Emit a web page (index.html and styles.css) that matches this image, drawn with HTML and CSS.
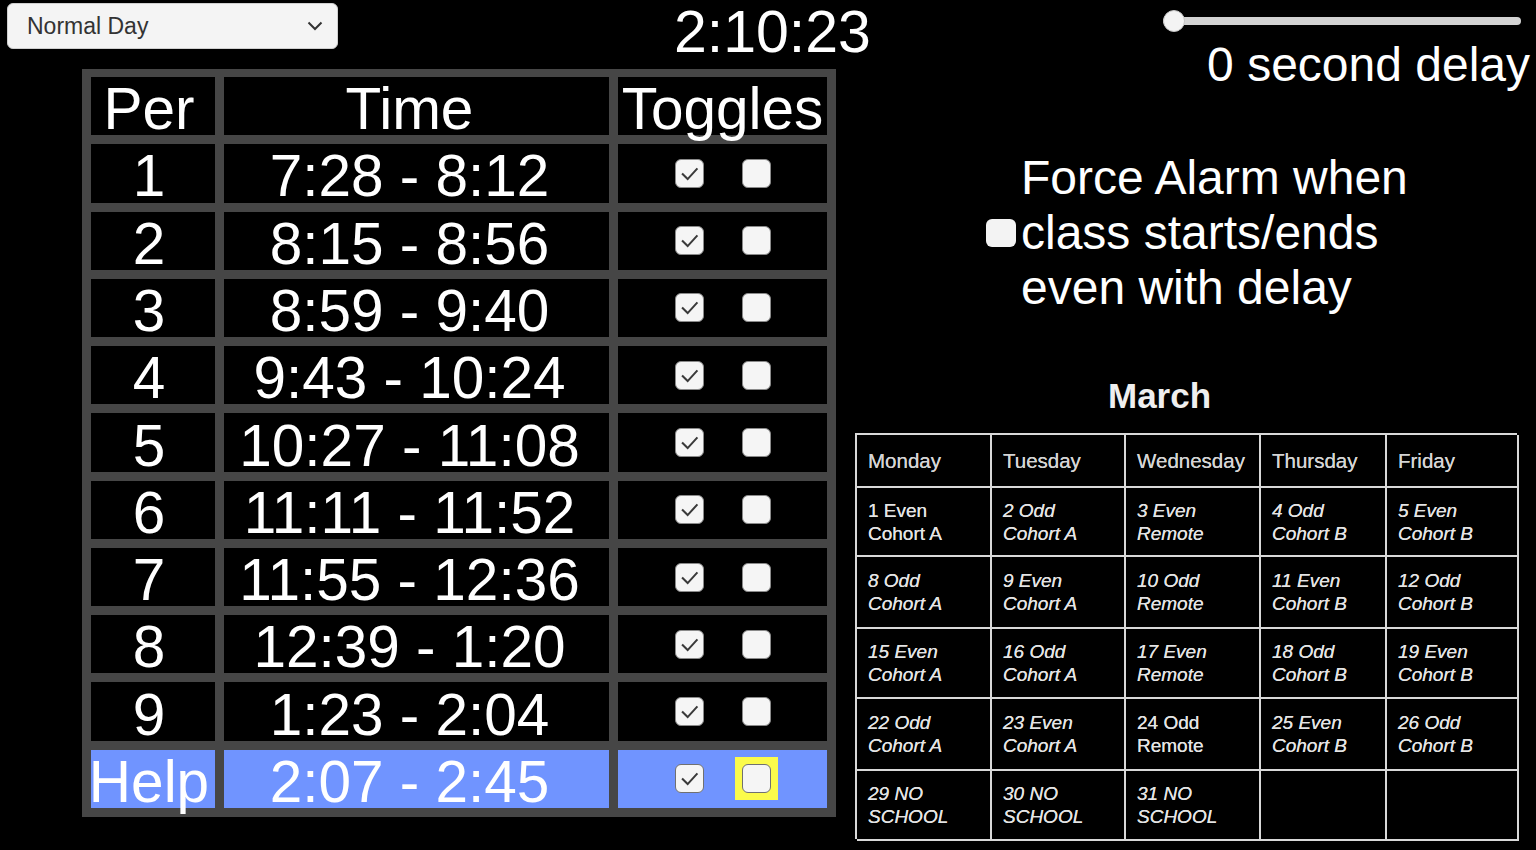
FILE: index.html
```html
<!DOCTYPE html>
<html>
<head>
<meta charset="utf-8">
<title>Bell Schedule</title>
<link rel="stylesheet" href="styles.css">
</head>
<body>
<div class="page">
  <div class="left">
    <div class="topbar">
      <div class="select">
        <span>Normal Day</span>
        <svg class="chev" width="16" height="10" viewBox="0 0 16 10"><path d="M1.5 1.5 L8 8 L14.5 1.5" fill="none" stroke="#333" stroke-width="2"/></svg>
      </div>
      <div class="clock">2:10:23</div>
    </div>
    <div class="sched">
      <div class="c c1">Per</div><div class="c c2">Time</div><div class="c c3">Toggles</div>

      <div class="c c1">1</div><div class="c c2">7:28 - 8:12</div><div class="c c3"><span class="cb on"><svg viewBox="0 0 29 29"><path d="M6.5 14.5 L12.5 20.5 L23 9"/></svg></span><span class="cb"></span></div>
      <div class="c c1">2</div><div class="c c2">8:15 - 8:56</div><div class="c c3"><span class="cb on"><svg viewBox="0 0 29 29"><path d="M6.5 14.5 L12.5 20.5 L23 9"/></svg></span><span class="cb"></span></div>
      <div class="c c1">3</div><div class="c c2">8:59 - 9:40</div><div class="c c3"><span class="cb on"><svg viewBox="0 0 29 29"><path d="M6.5 14.5 L12.5 20.5 L23 9"/></svg></span><span class="cb"></span></div>
      <div class="c c1">4</div><div class="c c2">9:43 - 10:24</div><div class="c c3"><span class="cb on"><svg viewBox="0 0 29 29"><path d="M6.5 14.5 L12.5 20.5 L23 9"/></svg></span><span class="cb"></span></div>
      <div class="c c1">5</div><div class="c c2">10:27 - 11:08</div><div class="c c3"><span class="cb on"><svg viewBox="0 0 29 29"><path d="M6.5 14.5 L12.5 20.5 L23 9"/></svg></span><span class="cb"></span></div>
      <div class="c c1">6</div><div class="c c2">11:11 - 11:52</div><div class="c c3"><span class="cb on"><svg viewBox="0 0 29 29"><path d="M6.5 14.5 L12.5 20.5 L23 9"/></svg></span><span class="cb"></span></div>
      <div class="c c1">7</div><div class="c c2">11:55 - 12:36</div><div class="c c3"><span class="cb on"><svg viewBox="0 0 29 29"><path d="M6.5 14.5 L12.5 20.5 L23 9"/></svg></span><span class="cb"></span></div>
      <div class="c c1">8</div><div class="c c2">12:39 - 1:20</div><div class="c c3"><span class="cb on"><svg viewBox="0 0 29 29"><path d="M6.5 14.5 L12.5 20.5 L23 9"/></svg></span><span class="cb"></span></div>
      <div class="c c1">9</div><div class="c c2">1:23 - 2:04</div><div class="c c3"><span class="cb on"><svg viewBox="0 0 29 29"><path d="M6.5 14.5 L12.5 20.5 L23 9"/></svg></span><span class="cb"></span></div>
      <div class="c c1 cur">Help</div><div class="c c2 cur">2:07 - 2:45</div><div class="c c3 cur"><span class="cb on"><svg viewBox="0 0 29 29"><path d="M6.5 14.5 L12.5 20.5 L23 9"/></svg></span><span class="hl"><span class="cb"></span></span></div>
    </div>
  </div>

  <div class="right">
    <div class="slider"><span class="thumb"></span></div>
    <div class="delay">0 second delay</div>
    <div class="force">
      <span class="cb big"></span>
      <div class="force-label">Force Alarm when class starts/ends even with delay</div>
    </div>
    <div class="cal">
      <div class="month">March</div>
      <div class="calgrid">
        <div class="h">Monday</div><div class="h">Tuesday</div><div class="h">Wednesday</div><div class="h">Thursday</div><div class="h">Friday</div>
        <div class="d up">1 Even<br>Cohort A</div><div class="d">2 Odd<br>Cohort A</div><div class="d">3 Even<br>Remote</div><div class="d">4 Odd<br>Cohort B</div><div class="d">5 Even<br>Cohort B</div>
        <div class="d">8 Odd<br>Cohort A</div><div class="d">9 Even<br>Cohort A</div><div class="d">10 Odd<br>Remote</div><div class="d">11 Even<br>Cohort B</div><div class="d">12 Odd<br>Cohort B</div>
        <div class="d">15 Even<br>Cohort A</div><div class="d">16 Odd<br>Cohort A</div><div class="d">17 Even<br>Remote</div><div class="d">18 Odd<br>Cohort B</div><div class="d">19 Even<br>Cohort B</div>
        <div class="d">22 Odd<br>Cohort A</div><div class="d">23 Even<br>Cohort A</div><div class="d up">24 Odd<br>Remote</div><div class="d">25 Even<br>Cohort B</div><div class="d">26 Odd<br>Cohort B</div>
        <div class="d">29 NO<br>SCHOOL</div><div class="d">30 NO<br>SCHOOL</div><div class="d">31 NO<br>SCHOOL</div><div class="d"></div><div class="d"></div>
      </div>
    </div>
  </div>
</div>
</body>
</html>
```

FILE: styles.css
```css
html, body {
  margin: 0;
  padding: 0;
  background: #000;
}
body {
  font-family: "Liberation Sans", Arial, sans-serif;
  color: #fff;
  width: 1536px;
  height: 850px;
  overflow: hidden;
}
.page {
  display: grid;
  grid-template-columns: 850px 686px;
  height: 850px;
}
.topbar {
  display: flex;
  align-items: flex-start;
  height: 69px;
}
.select {
  flex-shrink: 0;
  margin: 3px 0 0 7px;
  width: 331px;
  height: 46px;
  box-sizing: border-box;
  background: #f4f4f4;
  border: 1px solid #cfcfcf;
  border-radius: 6px;
  display: flex;
  align-items: center;
  justify-content: space-between;
  padding: 0 14px 0 19px;
  font-size: 23px;
  color: #333;
}
.chev {
  display: block;
}
.clock {
  flex-shrink: 0;
  margin: 3px 0 0 336px;
  font-size: 59px;
  line-height: 59px;
  white-space: nowrap;
}
.sched {
  margin-left: 82px;
  width: 754px;
  height: 748px;
  box-sizing: border-box;
  background: #464646;
  padding: 8px 9px 9px 9px;
  display: grid;
  grid-template-columns: 124px 385px 209px;
  grid-template-rows: repeat(11, 1fr);
  gap: 9px;
}
.c {
  background: #000;
  display: flex;
  align-items: center;
  justify-content: center;
  font-size: 58.5px;
  white-space: nowrap;
  min-height: 0;
  overflow: visible;
  padding-top: 5px;
  box-sizing: border-box;
}
.c1 { padding-right: 8px; }
.c2 { padding-right: 14px; }
.c3 { gap: 38px; padding-top: 0; }
.c3:first-child, .sched > .c3:nth-child(3) { padding-top: 5px; }
.c.cur {
  background: #7094ff;
}
.cb {
  display: block;
  width: 29px;
  height: 29px;
  box-sizing: border-box;
  background: #f5f5f5;
  border: 1px solid #8a8a8a;
  border-radius: 6px;
}
.cb svg {
  display: block;
  width: 27px;
  height: 27px;
}
.cb svg path {
  fill: none;
  stroke: #3a3a3a;
  stroke-width: 2.2;
}
.cur .cb {
  border-color: #707070;
  border-width: 1.5px;
}
.hl {
  display: block;
  padding: 7px;
  margin: -7px;
  background: #fbfb4b;
}
.right {
  display: flex;
  flex-direction: column;
  align-items: flex-end;
}
.slider {
  margin: 17px 15px 0 0;
  width: 358px;
  height: 8px;
  background: #d3d3d3;
  border-radius: 4px;
  position: relative;
}
.thumb {
  position: absolute;
  left: 0;
  top: -7px;
  width: 22px;
  height: 22px;
  box-sizing: border-box;
  border-radius: 50%;
  background: #f3f3f3;
  border: 1px solid #c4c4c4;
}
.delay {
  margin: 12px 6px 0 0;
  font-size: 48px;
  white-space: nowrap;
}
.force {
  align-self: flex-start;
  margin: 58px 0 0 136px;
  display: flex;
  align-items: center;
  gap: 5px;
}
.cb.big {
  width: 30px;
  height: 28px;
  border: none;
  background: #f3f3f3;
}
.force-label {
  width: 400px;
  font-size: 48px;
}
.cal {
  align-self: flex-start;
  margin: 61px 0 0 5px;
}
.month {
  padding-left: 253px;
  font-size: 35px;
  font-weight: bold;
  color: #efefef;
}
.calgrid {
  margin-top: 17px;
  display: grid;
  grid-template-columns: 135px 134px 135px 126px 132px;
  grid-template-rows: 53px 69px 72px 70px 72px 70px;
  border-top: 2px solid #d9d9d9;
  border-left: 2px solid #d9d9d9;
  box-sizing: border-box;
  width: 662px;
  height: 406px;
}
.calgrid > div {
  border-right: 2px solid #d9d9d9;
  border-bottom: 2px solid #d9d9d9;
  display: flex;
  flex-direction: column;
  justify-content: center;
  padding-left: 11px;
  color: #e4e4e4;
  white-space: nowrap;
  text-shadow: 0 0 0.6px #e4e4e4;
}
.calgrid .h {
  font-size: 20.5px;
  color: #d4d4d4;
}
.calgrid .d {
  font-size: 19px;
  line-height: 23px;
  font-style: italic;
}
.calgrid .d.up {
  font-style: normal;
}
```
